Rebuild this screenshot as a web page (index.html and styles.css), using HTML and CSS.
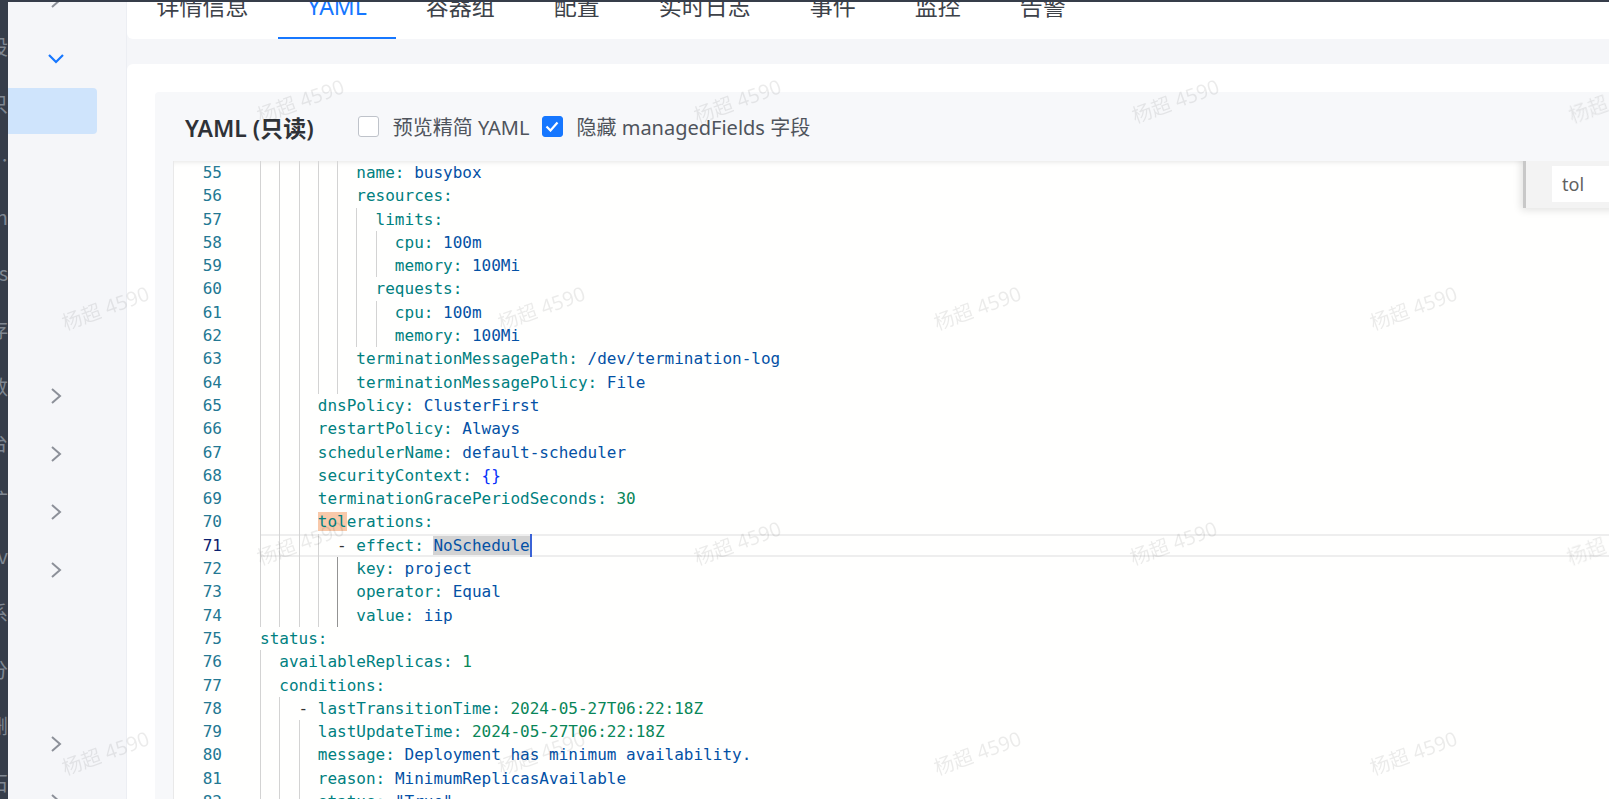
FILE: index.html
```html
<!DOCTYPE html>
<html lang="zh-CN">
<head>
  <meta charset="UTF-8" />
  <title>Deployment - YAML</title>
  <meta name="viewport" content="width=device-width, initial-scale=1.0"/>
  <link rel="stylesheet" href="styles.css">
</head>
<body>
  <div class="frame">
    <div class="ghost">
      <div>设</div><div>只</div><div>…</div><div>In</div><div>s</div><div>存</div><div>数</div>
      <div>台</div><div>扩</div><div>ov</div><div>系</div><div>分</div><div>删</div><div>石</div>
    </div>

    <div class="window">
      <nav class="sidebar">
        <div class="menu-item"><span class="ico"><svg width="12" height="18" viewBox="0 0 12 18"><path d="M2 2l8 7-8 7" fill="none" stroke="#8c9099" stroke-width="2"/></svg></span></div>
        <div class="menu-item"><span class="ico"><svg width="18" height="11" viewBox="0 0 18 11"><path d="M2 2l7 7 7-7" fill="none" stroke="#1677ff" stroke-width="2.2"/></svg></span></div>
        <div class="sub-item active"></div>
        <div class="sub-item"></div>
        <div class="sub-item"></div>
        <div class="sub-item"></div>
        <div class="sub-item"></div>
        <div class="menu-item"><span class="ico"><svg width="12" height="18" viewBox="0 0 12 18"><path d="M2 2l8 7-8 7" fill="none" stroke="#8c9099" stroke-width="2"/></svg></span></div>
        <div class="menu-item"><span class="ico"><svg width="12" height="18" viewBox="0 0 12 18"><path d="M2 2l8 7-8 7" fill="none" stroke="#8c9099" stroke-width="2"/></svg></span></div>
        <div class="menu-item"><span class="ico"><svg width="12" height="18" viewBox="0 0 12 18"><path d="M2 2l8 7-8 7" fill="none" stroke="#8c9099" stroke-width="2"/></svg></span></div>
        <div class="menu-item"><span class="ico"><svg width="12" height="18" viewBox="0 0 12 18"><path d="M2 2l8 7-8 7" fill="none" stroke="#8c9099" stroke-width="2"/></svg></span></div>
        <div class="menu-item"></div>
        <div class="menu-item"></div>
        <div class="menu-item"><span class="ico"><svg width="12" height="18" viewBox="0 0 12 18"><path d="M2 2l8 7-8 7" fill="none" stroke="#8c9099" stroke-width="2"/></svg></span></div>
        <div class="menu-item"><span class="ico"><svg width="12" height="18" viewBox="0 0 12 18"><path d="M2 2l8 7-8 7" fill="none" stroke="#8c9099" stroke-width="2"/></svg></span></div>
      </nav>

      <main class="main">
        <div class="tabs-card">
          <div class="tab">详情信息</div>
          <div class="tab active">YAML</div>
          <div class="tab">容器组</div>
          <div class="tab">配置</div>
          <div class="tab">实时日志</div>
          <div class="tab">事件</div>
          <div class="tab">监控</div>
          <div class="tab">告警</div>
        </div>

        <div class="content-card">
          <div class="yaml-panel">
            <div class="panel-head">
              <span class="panel-title">YAML (只读)</span>
              <span class="cb"></span>
              <span class="cb-label">预览精简 YAML</span>
              <span class="cb on"><svg width="14" height="11" viewBox="0 0 14 11"><path d="M1.5 5.5l4 4 7-8" fill="none" stroke="#fff" stroke-width="2.2"/></svg></span>
              <span class="cb-label">隐藏 managedFields 字段</span>
            </div>

            <div class="editor">
              <div class="find"><div class="find-input">tol</div></div>

              <div class="row"><span class="ln">55</span><span class="code"><i class="ig"></i><i class="ig"></i><i class="ig"></i><i class="ig"></i><i class="ig"></i><span class="k">name:</span> <span class="s">busybox</span></span></div>
              <div class="row"><span class="ln">56</span><span class="code"><i class="ig"></i><i class="ig"></i><i class="ig"></i><i class="ig"></i><i class="ig"></i><span class="k">resources:</span></span></div>
              <div class="row"><span class="ln">57</span><span class="code"><i class="ig"></i><i class="ig"></i><i class="ig"></i><i class="ig"></i><i class="ig"></i><i class="ig"></i><span class="k">limits:</span></span></div>
              <div class="row"><span class="ln">58</span><span class="code"><i class="ig"></i><i class="ig"></i><i class="ig"></i><i class="ig"></i><i class="ig"></i><i class="ig"></i><i class="ig"></i><span class="k">cpu:</span> <span class="s">100m</span></span></div>
              <div class="row"><span class="ln">59</span><span class="code"><i class="ig"></i><i class="ig"></i><i class="ig"></i><i class="ig"></i><i class="ig"></i><i class="ig"></i><i class="ig"></i><span class="k">memory:</span> <span class="s">100Mi</span></span></div>
              <div class="row"><span class="ln">60</span><span class="code"><i class="ig"></i><i class="ig"></i><i class="ig"></i><i class="ig"></i><i class="ig"></i><i class="ig"></i><span class="k">requests:</span></span></div>
              <div class="row"><span class="ln">61</span><span class="code"><i class="ig"></i><i class="ig"></i><i class="ig"></i><i class="ig"></i><i class="ig"></i><i class="ig"></i><i class="ig"></i><span class="k">cpu:</span> <span class="s">100m</span></span></div>
              <div class="row"><span class="ln">62</span><span class="code"><i class="ig"></i><i class="ig"></i><i class="ig"></i><i class="ig"></i><i class="ig"></i><i class="ig"></i><i class="ig"></i><span class="k">memory:</span> <span class="s">100Mi</span></span></div>
              <div class="row"><span class="ln">63</span><span class="code"><i class="ig"></i><i class="ig"></i><i class="ig"></i><i class="ig"></i><i class="ig"></i><span class="k">terminationMessagePath:</span> <span class="s">/dev/termination-log</span></span></div>
              <div class="row"><span class="ln">64</span><span class="code"><i class="ig"></i><i class="ig"></i><i class="ig"></i><i class="ig"></i><i class="ig"></i><span class="k">terminationMessagePolicy:</span> <span class="s">File</span></span></div>
              <div class="row"><span class="ln">65</span><span class="code"><i class="ig"></i><i class="ig"></i><i class="ig"></i><span class="k">dnsPolicy:</span> <span class="s">ClusterFirst</span></span></div>
              <div class="row"><span class="ln">66</span><span class="code"><i class="ig"></i><i class="ig"></i><i class="ig"></i><span class="k">restartPolicy:</span> <span class="s">Always</span></span></div>
              <div class="row"><span class="ln">67</span><span class="code"><i class="ig"></i><i class="ig"></i><i class="ig"></i><span class="k">schedulerName:</span> <span class="s">default-scheduler</span></span></div>
              <div class="row"><span class="ln">68</span><span class="code"><i class="ig"></i><i class="ig"></i><i class="ig"></i><span class="k">securityContext:</span> <span class="b">{}</span></span></div>
              <div class="row"><span class="ln">69</span><span class="code"><i class="ig"></i><i class="ig"></i><i class="ig"></i><span class="k">terminationGracePeriodSeconds:</span> <span class="n">30</span></span></div>
              <div class="row"><span class="ln">70</span><span class="code"><i class="ig"></i><i class="ig"></i><i class="ig"></i><span class="k"><span class="match">tol</span>erations:</span></span></div>
              <div class="row"><span class="ln cur">71</span><span class="code cur"><i class="ig"></i><i class="ig"></i><i class="ig"></i><i class="ig"></i><span class="d">- </span><span class="k">effect:</span> <span class="s sel">NoSchedule</span><i class="caret"></i></span></div>
              <div class="row"><span class="ln">72</span><span class="code"><i class="ig"></i><i class="ig"></i><i class="ig"></i><i class="ig"></i><i class="ig act"></i><span class="k">key:</span> <span class="s">project</span></span></div>
              <div class="row"><span class="ln">73</span><span class="code"><i class="ig"></i><i class="ig"></i><i class="ig"></i><i class="ig"></i><i class="ig act"></i><span class="k">operator:</span> <span class="s">Equal</span></span></div>
              <div class="row"><span class="ln">74</span><span class="code"><i class="ig"></i><i class="ig"></i><i class="ig"></i><i class="ig"></i><i class="ig act"></i><span class="k">value:</span> <span class="s">iip</span></span></div>
              <div class="row"><span class="ln">75</span><span class="code"><span class="k">status:</span></span></div>
              <div class="row"><span class="ln">76</span><span class="code"><i class="ig"></i><span class="k">availableReplicas:</span> <span class="n">1</span></span></div>
              <div class="row"><span class="ln">77</span><span class="code"><i class="ig"></i><span class="k">conditions:</span></span></div>
              <div class="row"><span class="ln">78</span><span class="code"><i class="ig"></i><i class="ig"></i><span class="d">- </span><span class="k">lastTransitionTime:</span> <span class="n">2024-05-27T06:22:18Z</span></span></div>
              <div class="row"><span class="ln">79</span><span class="code"><i class="ig"></i><i class="ig"></i><i class="ig"></i><span class="k">lastUpdateTime:</span> <span class="n">2024-05-27T06:22:18Z</span></span></div>
              <div class="row"><span class="ln">80</span><span class="code"><i class="ig"></i><i class="ig"></i><i class="ig"></i><span class="k">message:</span> <span class="s">Deployment has minimum availability.</span></span></div>
              <div class="row"><span class="ln">81</span><span class="code"><i class="ig"></i><i class="ig"></i><i class="ig"></i><span class="k">reason:</span> <span class="s">MinimumReplicasAvailable</span></span></div>
              <div class="row"><span class="ln">82</span><span class="code"><i class="ig"></i><i class="ig"></i><i class="ig"></i><span class="k">status:</span> <span class="s">"True"</span></span></div>
            </div>
          </div>
        </div>
      </main>
    </div>
  </div>

  <div class="wm-layer">
    <span class="wm">杨超 4590</span><span class="wm">杨超 4590</span><span class="wm">杨超 4590</span><span class="wm">杨超 4590</span>
    <span class="wm">杨超 4590</span><span class="wm">杨超 4590</span><span class="wm">杨超 4590</span><span class="wm">杨超 4590</span>
    <span class="wm">杨超 4590</span><span class="wm">杨超 4590</span><span class="wm">杨超 4590</span><span class="wm">杨超 4590</span>
    <span class="wm">杨超 4590</span><span class="wm">杨超 4590</span><span class="wm">杨超 4590</span><span class="wm">杨超 4590</span>
  </div>
</body>
</html>
```

FILE: styles.css
```css
* { box-sizing: border-box; }
html, body { margin: 0; height: 100%; overflow: hidden; }
body { background: #363d4a; font-family: "Noto Sans", "Noto Sans CJK SC", sans-serif; color: #303133; }

.frame { display: flex; height: 100%; }

/* window behind, only its cut-off edge shows */
.ghost { width: 8px; flex: none; overflow: hidden; padding-top: 19px; color: #7f8792; font-size: 20px; font-family: "Noto Sans CJK SC", sans-serif; }
.ghost div { display: flex; justify-content: flex-end; height: 56.6px; line-height: 56.6px; white-space: nowrap; }

.window { flex: 1; display: flex; margin-top: 2px; overflow: hidden; background: #f5f6f9; min-width: 0; }

/* sidebar */
.sidebar { width: 119px; flex: none; border-right: 1px solid #eceef3; display: flex; flex-direction: column; margin-top: -31px; }
.menu-item { height: 58px; flex: none; display: flex; align-items: center; padding-left: 39px; }
.ico { width: 18px; display: flex; justify-content: center; }
.sub-item { height: 46px; width: 89px; margin: 1px 0 9px; flex: none; }
.sub-item.active { background: #cfe4fc; border-radius: 0 4px 4px 0; }

/* main */
.main { flex: 1; display: flex; flex-direction: column; margin-right: -24px; min-width: 0; }
.tabs-card { background: #fff; border-radius: 0 0 0 6px; margin-top: -27px; display: flex; flex: none; }
.tab { height: 64px; line-height: 62px; padding: 0 29.5px; font-size: 23px; border-bottom: 2px solid transparent; color: #3d4249; white-space: nowrap; }
.tab.active { color: #1677ff; border-bottom-color: #1677ff; }

.content-card { flex: 1; margin-top: 25px; background: #fff; border-radius: 6px 0 0 0; padding: 28px 0 0 28px; display: flex; min-height: 0; }
.yaml-panel { flex: 1; background: #f7f8fa; display: flex; flex-direction: column; min-height: 0; border-radius: 4px 0 0 0; }
.panel-head { height: 69px; flex: none; display: flex; align-items: center; padding-left: 30px; }
.panel-title { font-size: 23px; font-weight: 600; color: #2f3237; margin-right: 44px; }
.cb { width: 21px; height: 21px; border: 1.5px solid #bfc3ca; border-radius: 3px; background: #fff; margin-right: 14px; display: flex; align-items: center; justify-content: center; flex: none; }
.cb.on { background: #1677ff; border-color: #1677ff; }
.cb-label { font-size: 20px; color: #4f545c; margin-right: 12px; }

/* code editor */
.editor { flex: 1; margin-left: 18px; background: #fffffe; border-left: 1px solid #e9e9e9; position: relative; overflow: hidden; font-family: "DejaVu Sans Mono", monospace; font-size: 16px; }
.editor::before { content: ""; position: absolute; top: 0; left: 0; right: 0; height: 6px; box-shadow: #dddddd 0 6px 6px -6px inset; z-index: 2; }
.row { display: flex; height: 23.3px; line-height: 23.3px; }
.ln { width: 86px; flex: none; text-align: right; padding-right: 38px; color: #237893; }
.ln.cur { color: #0b216f; }
.code { flex: 1; white-space: pre; color: #000; }
.code.cur { box-shadow: inset 0 2px #eeeeee, inset 0 -2px #eeeeee; }
.ig { display: inline-block; width: 2ch; height: 23.3px; vertical-align: top; box-shadow: inset 1px 0 #d3d3d3; }
.ig.act { box-shadow: inset 1px 0 #939393; }
.k { color: #008080; }
.s { color: #0451a5; }
.n { color: #098658; }
.b { color: #0431fa; }
.d { color: #333; }
.match { background: rgba(234, 92, 0, 0.33); }
.sel { background: #d3d3d3; }
.caret { display: inline-block; width: 2px; height: 23.3px; vertical-align: top; background: #3b63d6; margin-right: -2px; }

.find { position: absolute; top: 0; right: 0; width: 110px; height: 47px; background: #f3f3f3; border-left: 3px solid #c8c8c8; box-shadow: 0 0 8px 2px rgba(0, 0, 0, 0.12); padding: 5px 0 0 26px; z-index: 3; }
.find-input { height: 36px; background: #fff; font-family: "Noto Sans", sans-serif; font-size: 18px; line-height: 36px; color: #616161; padding-left: 10px; }

/* watermark overlay */
.wm-layer { position: fixed; top: 0; left: 0; right: 0; bottom: 0; pointer-events: none; z-index: 20; }
.wm { position: absolute; transform: translate(-50%, -50%) rotate(-20deg); font-size: 20px; color: rgba(0, 0, 0, 0.08); white-space: nowrap; font-family: "Noto Sans", "Noto Sans CJK SC", sans-serif; }
.wm:nth-child(1) { left: 300px; top: 100px; }
.wm:nth-child(2) { left: 737px; top: 100px; }
.wm:nth-child(3) { left: 1175px; top: 100px; }
.wm:nth-child(4) { left: 1612px; top: 100px; }
.wm:nth-child(5) { left: 105px; top: 307px; }
.wm:nth-child(6) { left: 541px; top: 307px; }
.wm:nth-child(7) { left: 977px; top: 307px; }
.wm:nth-child(8) { left: 1413px; top: 307px; }
.wm:nth-child(9) { left: 300px; top: 542px; }
.wm:nth-child(10) { left: 737px; top: 542px; }
.wm:nth-child(11) { left: 1173px; top: 542px; }
.wm:nth-child(12) { left: 1610px; top: 542px; }
.wm:nth-child(13) { left: 105px; top: 752px; }
.wm:nth-child(14) { left: 541px; top: 752px; }
.wm:nth-child(15) { left: 977px; top: 752px; }
.wm:nth-child(16) { left: 1413px; top: 752px; }
```
